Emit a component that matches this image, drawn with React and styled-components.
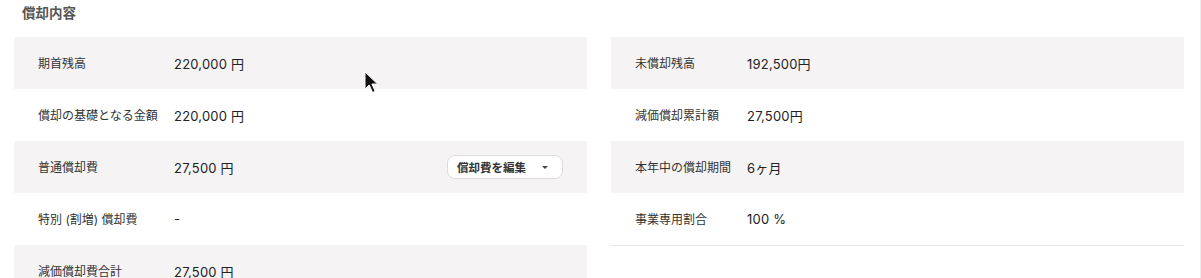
import React from 'react';
import styled, { createGlobalStyle } from 'styled-components';

const GlobalStyle = createGlobalStyle`
  html, body {
    margin: 0;
    padding: 0;
    background: #fff;
    font-family: Inter, "Noto Sans CJK JP", sans-serif;
    color: #222;
  }
`;

const Page = styled.div`
  position: relative;
  height: 278px;
  overflow: hidden;
  border-right: 1px solid #ececec;
  padding: 0 16px 0 14px;
`;

const Heading = styled.h3`
  margin: 0;
  padding: 2px 0 0 8px;
  height: 35px;
  font-size: 13.5px;
  font-weight: 700;
  color: #555;
`;

const Columns = styled.div`
  display: grid;
  grid-template-columns: 573px 573px;
  column-gap: 24px;
  align-items: start;
`;

const Table = styled.div`
  display: flex;
  flex-direction: column;
  border-bottom: ${(p) => (p.bordered ? '1px solid #e6e6e6' : 'none')};
`;

const Row = styled.div`
  display: flex;
  align-items: center;
  height: 52px;
  padding: 0 24px;
  background: ${(p) => (p.shaded ? '#f5f3f4' : '#fff')};
`;

const Label = styled.div`
  width: ${(p) => p.width}px;
  font-size: 12px;
  color: #333;
  margin-top: -2px;
`;

const Value = styled.div`
  flex: 1;
  font-size: 13px;
  letter-spacing: 0.2px;
  color: #222;
`;

const EditButton = styled.button`
  display: flex;
  align-items: center;
  gap: 16px;
  height: 24px;
  padding: 0 14px 0 9px;
  background: #fff;
  border: 1px solid #dcdcdc;
  border-radius: 8px;
  font-family: inherit;
  font-size: 11.5px;
  font-weight: 700;
  color: #333;
  cursor: pointer;
`;

const Caret = styled.span`
  width: 0;
  height: 0;
  border-left: 3px solid transparent;
  border-right: 3px solid transparent;
  border-top: 3px solid #444;
`;

const Pointer = styled.svg`
  position: absolute;
  left: 364px;
  top: 71px;
`;

const leftRows = [
  ['期首残高', '220,000 円'],
  ['償却の基礎となる金額', '220,000 円'],
  ['普通償却費', '27,500 円', true],
  ['特別 (割増) 償却費', '-'],
  ['減価償却費合計', '27,500 円'],
];

const rightRows = [
  ['未償却残高', '192,500円'],
  ['減価償却累計額', '27,500円'],
  ['本年中の償却期間', '6ヶ月'],
  ['事業専用割合', '100 %'],
];

export default function App() {
  return (
    <>
      <GlobalStyle />
      <Page>
        <Heading>償却内容</Heading>
        <Columns>
          <Table>
            {leftRows.map(([label, value, editable], i) => (
              <Row key={label} shaded={i % 2 === 0}>
                <Label width={136}>{label}</Label>
                <Value>{value}</Value>
                {editable && (
                  <EditButton>
                    償却費を編集
                    <Caret />
                  </EditButton>
                )}
              </Row>
            ))}
          </Table>
          <Table bordered>
            {rightRows.map(([label, value], i) => (
              <Row key={label} shaded={i % 2 === 0}>
                <Label width={112}>{label}</Label>
                <Value>{value}</Value>
              </Row>
            ))}
          </Table>
        </Columns>
        <Pointer width="17" height="24" viewBox="0 0 17 24">
          <path d="M1 1 L1 18 L5.2 14 L8.6 21.5 L11.2 20.3 L7.9 13 L13.6 13 Z" fill="#111" stroke="#fff" strokeWidth="1" />
        </Pointer>
      </Page>
    </>
  );
}
